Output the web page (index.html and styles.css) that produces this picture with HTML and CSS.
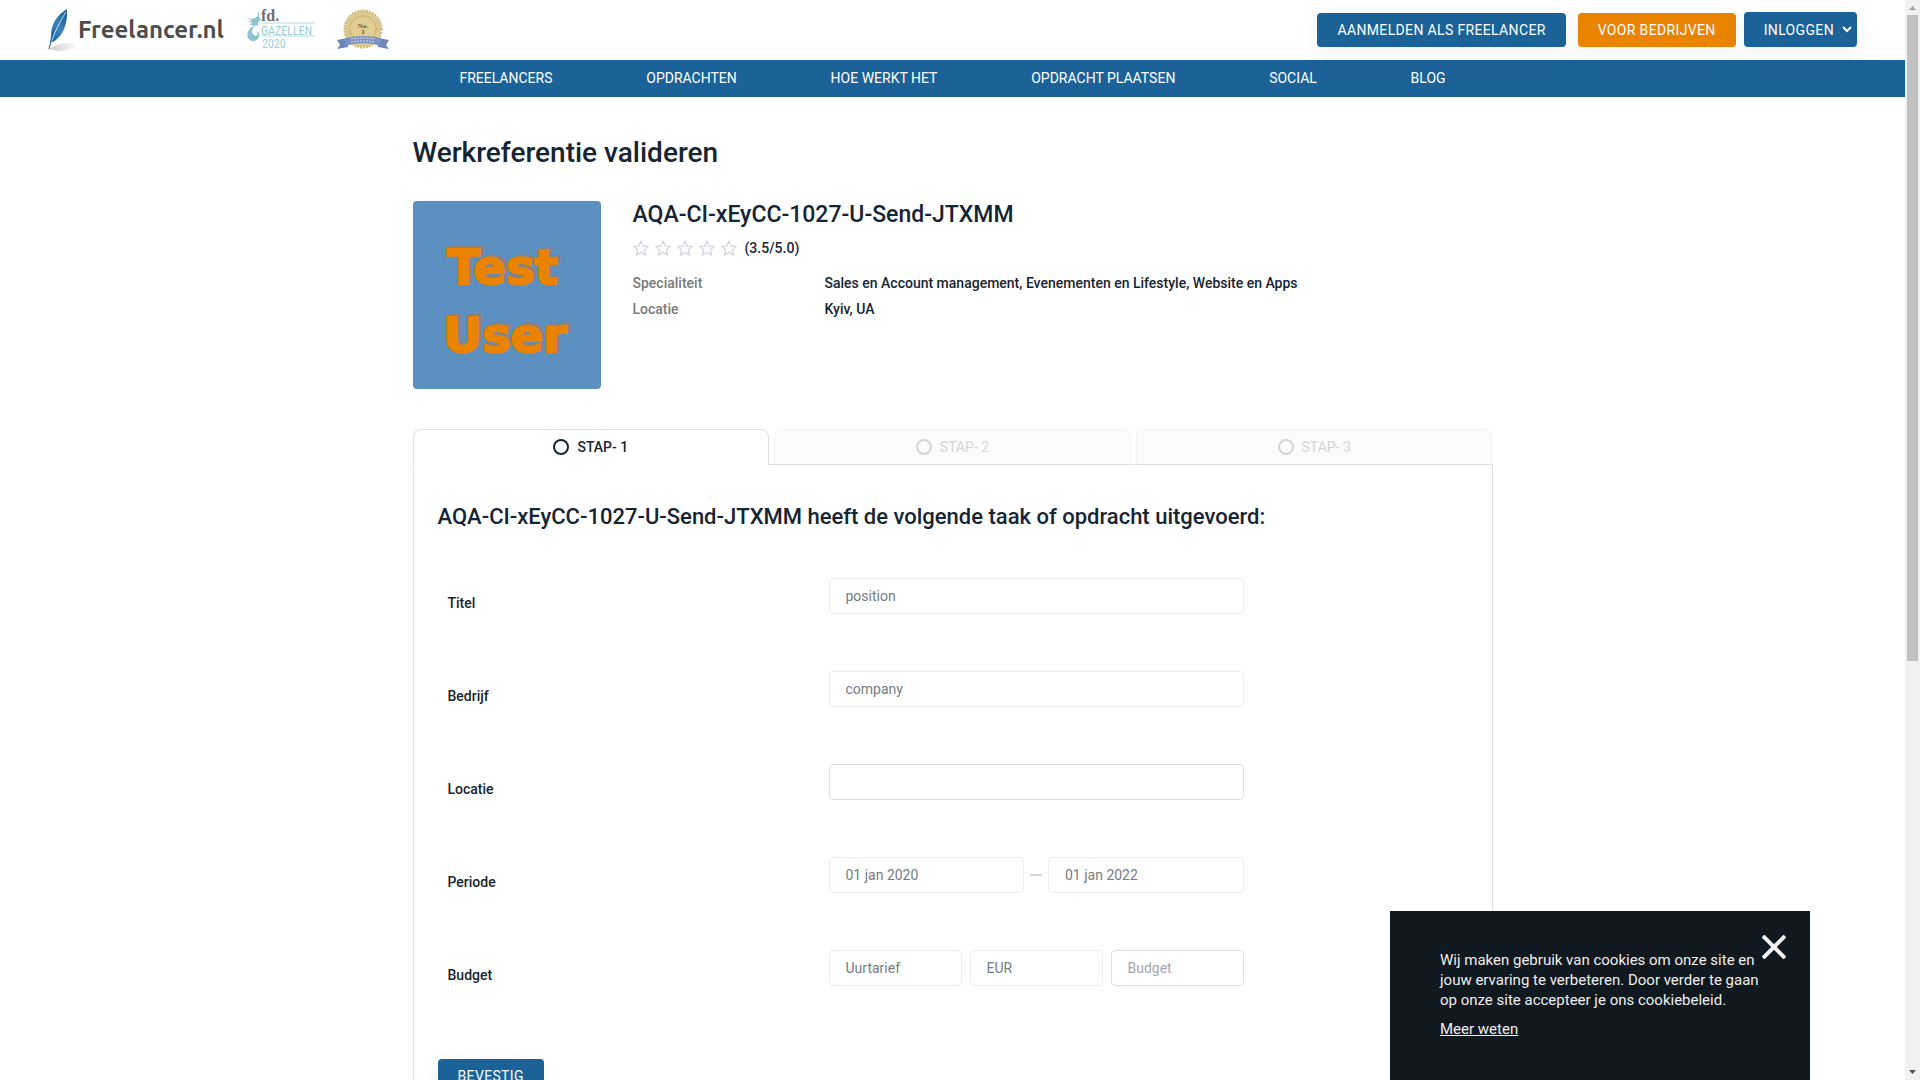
FILE: index.html
```html
<!DOCTYPE html>
<html lang="nl">
<head>
<meta charset="utf-8">
<title>Werkreferentie valideren - Freelancer.nl</title>
<meta name="viewport" content="width=device-width, initial-scale=1">
<link rel="stylesheet" href="styles.css">
</head>
<body>
<div class="window">
  <div class="page">
    <header class="topbar">
      <div class="brand">
        <a class="logo" href="#" aria-label="Freelancer.nl">
          <svg width="180" height="46" viewBox="0 0 180 46" aria-hidden="true">
            <defs>
              <linearGradient id="feather" x1="0" y1="1" x2="1" y2="0"><stop offset="0" stop-color="#1b5f99"/><stop offset=".5" stop-color="#3b82bd"/><stop offset="1" stop-color="#14568d"/></linearGradient>
              <linearGradient id="shade" x1="0" x2="1"><stop offset="0" stop-color="#cfcfcf"/><stop offset="1" stop-color="#fff"/></linearGradient>
            </defs>
            <path d="M1 41C10 35 21 34 31 36C27 41 15 45 5 42Z" fill="url(#shade)"/>
            <path d="M19 1C9 7 3 16 3 28L2 35C12 32 20 20 19 1Z" fill="url(#feather)"/>
            <path d="M18 4C12 13 6 25 1 41" fill="none" stroke="#c8def0" stroke-width="1"/>
            <path d="M4 29L1 41" stroke="#2f6698" stroke-width="1"/>
            <text class="logo-text" x="30" y="30">Freelancer.nl</text>
          </svg>
        </a>
        <svg class="gazellen" width="70" height="40" viewBox="0 0 70 40" role="img" aria-label="FD Gazellen 2020">
          <path d="M0 7L5 9L9 8C12 7 12 4 13 0L13 7L15 10L13 11C11 13 12 15 13 16L10 15C6 17 5 23 8 25C11 27 13 24 10 21C15 22 14 29 9 31C3 32 0 27 2 22C3 19 5 17 8 16L3 14L7 13L2 11L6 11Z" fill="#8cc5d2"/>
          <path d="M16 13H69M16 26H69" stroke="#b5d9e1" stroke-width="1"/>
          <text class="fd" x="15" y="11">fd.</text>
          <text class="gaz" x="15" y="25">GAZELLEN</text>
          <text class="year" x="16" y="38">2020</text>
        </svg>
        <svg class="award" width="54" height="42" viewBox="0 0 54 42" role="img" aria-label="No. 1">
          <circle cx="27" cy="20" r="18" fill="#dcc98e"/>
          <circle cx="27" cy="20" r="18.500" fill="none" stroke="#cdb879" stroke-width="2" stroke-dasharray="2 1"/>
          <circle cx="27" cy="20" r="13" fill="#e0cd92" stroke="#a9955c" stroke-dasharray="1 1"/>
          <text class="no" x="27" y="19">No.</text><text class="no" x="27" y="25">1</text>
          <path d="M1 40L4 36L1 31L12 29V38ZM53 40L50 36L53 31L42 29V38Z" fill="#6d85b8"/>
          <path d="M9 29Q27 25 45 29V37Q27 31 9 37Z" fill="#7b93c4"/>
          <path d="M15 30Q27 28 39 30M15 33Q27 31 39 33" fill="none" stroke="#d5deed" stroke-dasharray="2 1"/>
        </svg>
      </div>
      <div class="actions">
        <a class="btn" href="#">AANMELDEN ALS FREELANCER</a>
        <a class="btn btn-orange" href="#">VOOR BEDRIJVEN</a>
        <button class="btn btn-login" type="button">INLOGGEN
          <svg width="10" height="7" viewBox="0 0 10 7" aria-hidden="true"><path d="M1 1L5 5L9 1" fill="none" stroke="#fff" stroke-width="2"/></svg>
        </button>
      </div>
    </header>
    <nav class="nav">
      <ul class="nav-list">
        <li><a href="#">FREELANCERS</a></li>
        <li><a href="#">OPDRACHTEN</a></li>
        <li><a href="#">HOE WERKT HET</a></li>
        <li><a href="#">OPDRACHT PLAATSEN</a></li>
        <li><a href="#">SOCIAL</a></li>
        <li><a href="#">BLOG</a></li>
      </ul>
    </nav>
    <main class="content">
      <h1>Werkreferentie valideren</h1>
      <section class="profile">
        <svg class="avatar" width="188" height="188" viewBox="0 0 188 188" role="img" aria-label="Test User">
          <rect width="188" height="188" fill="#5b90c1"/>
          <g class="avatar-shadow"><text x="37" y="81">Test</text><text x="33" y="149">User</text></g>
          <g class="avatar-text"><text x="34" y="83">Test</text><text x="30" y="151">User</text></g>
        </svg>
        <div class="info">
          <h2>AQA-CI-xEyCC-1027-U-Send-JTXMM</h2>
          <div class="rating">
            <svg width="104" height="16" viewBox="0 0 104 16" aria-hidden="true">
              <defs><path id="star" d="M8 1L10 6L15 6.500L11.300 10L12.500 15L8 12.300L3.500 15L4.700 10L1 6.500L6 6Z" fill="none" stroke="#d5dae0" stroke-width="1.500" stroke-linejoin="round"/></defs>
              <use href="#star"/><use href="#star" x="22"/><use href="#star" x="44"/><use href="#star" x="66"/><use href="#star" x="88"/>
            </svg>
            <span>(3.5/5.0)</span>
          </div>
          <dl class="facts">
            <dt>Specialiteit</dt><dd>Sales en Account management, Evenementen en Lifestyle, Website en Apps</dd>
            <dt>Locatie</dt><dd>Kyiv, UA</dd>
          </dl>
        </div>
      </section>
      <div class="tabs">
        <button class="tab tab-active" type="button"><span class="ring"></span>STAP- 1</button>
        <button class="tab" type="button" disabled><span class="ring"></span>STAP- 2</button>
        <button class="tab" type="button" disabled><span class="ring"></span>STAP- 3</button>
      </div>
      <form class="panel">
        <h3>AQA-CI-xEyCC-1027-U-Send-JTXMM heeft de volgende taak of opdracht uitgevoerd:</h3>
        <div class="row"><label for="title">Titel</label><div class="fields"><input id="title" type="text" value="position" disabled></div></div>
        <div class="row"><label for="company">Bedrijf</label><div class="fields"><input id="company" type="text" value="company" disabled></div></div>
        <div class="row"><label for="place">Locatie</label><div class="fields"><input id="place" type="text"></div></div>
        <div class="row"><label for="from">Periode</label><div class="fields period"><input id="from" type="text" value="01 jan 2020" disabled><span class="dash"></span><input type="text" value="01 jan 2022" aria-label="Einddatum" disabled></div></div>
        <div class="row"><label for="rate">Budget</label><div class="fields"><input id="rate" type="text" value="Uurtarief" disabled><input type="text" value="EUR" aria-label="Valuta" disabled><input type="text" placeholder="Budget" aria-label="Bedrag"></div></div>
        <button class="btn submit" type="button">BEVESTIG</button>
      </form>
    </main>
  </div>
  <div class="scrollbar" aria-hidden="true">
    <svg width="15" height="15" viewBox="0 0 15 15"><path d="M4 10L7.500 6L11 10Z" fill="#a3a3a3"/></svg>
    <div class="track"><div class="thumb"></div></div>
    <svg width="15" height="15" viewBox="0 0 15 15"><path d="M4 5L7.500 9L11 5Z" fill="#505050"/></svg>
  </div>
</div>
<aside class="cookie">
  <p>Wij maken gebruik van cookies om onze site en jouw ervaring te verbeteren. Door verder te gaan op onze site accepteer je ons cookiebeleid.</p>
  <a href="#">Meer weten</a>
  <button class="close" type="button" aria-label="Sluiten"><svg width="24" height="24" viewBox="0 0 24 24" aria-hidden="true"><path d="M1 1L23 23M23 1L1 23" stroke="#f1f1f1" stroke-width="4"/></svg></button>
</aside>
</body>
</html>
```
FILE: styles.css
```css
* { box-sizing: border-box; }
body { margin: 0; font-family: Roboto, "Liberation Sans", sans-serif; font-size: 14px; line-height: 20px; color: #162533; background: #fff; }
h1, h2, h3, p, dl, dd, ul { margin: 0; padding: 0; font-weight: 500; }
button, input { font: inherit; }
a { color: inherit; text-decoration: none; }
.window { display: flex; height: 100vh; overflow: hidden; }
.page { flex: 1; min-width: 0; overflow: hidden; }

.topbar { display: flex; justify-content: space-between; height: 60px; padding: 0 48px; }
.brand { display: flex; align-items: flex-start; }
.logo { margin-top: 8px; }
.logo svg { display: block; }
.logo-text { font: 700 24px Ubuntu, "Noto Sans", sans-serif; fill: #4d4d4d; }
.gazellen { margin: 10px 0 0 18px; overflow: visible; }
.fd { font: 700 16px "Liberation Serif", serif; fill: #6e6e6e; }
.gaz { font: 400 12px "Roboto Condensed", "Liberation Sans Narrow", Roboto, sans-serif; fill: #9dced9; }
.year { font: 400 12px "Roboto Condensed", "Liberation Sans Narrow", Roboto, sans-serif; fill: #9dced9; }
.award { margin: 9px 0 0 20px; }
.no { font: 700 7px "Liberation Serif", serif; fill: #6b5d38; text-anchor: middle; }
.actions { display: flex; align-items: flex-end; padding-bottom: 13px; }
.btn { display: inline-flex; align-items: center; height: 34px; padding: 0 20px; border: 0; border-radius: 4px; background: #1b6299; color: #fff; letter-spacing: .025em; box-shadow: 0 10px 30px rgba(0, 0, 0, .05); }
.btn-orange { margin: 0 8px 0 12px; background: #e98300; }
.btn-login { height: 35px; gap: 8px; padding-right: 5px; }

.nav { background: #1b6299; color: #fff; }
.nav-list { display: flex; justify-content: space-around; width: 1080px; max-width: 100%; margin: 0 auto; padding: 8px 0 9px; list-style: none; font-weight: 400; }

.content { width: 1080px; max-width: 100%; margin: 0 auto; padding-top: 36px; }
h1 { font-size: 28px; line-height: 40px; }
.profile { display: flex; gap: 32px; margin-top: 28px; }
.avatar { border-radius: 4px; }
.avatar text { font: 700 48px "DejaVu Sans", sans-serif; stroke-width: 2px; }
.avatar-shadow { fill: #8d8078; stroke: #8d8078; }
.avatar-text { fill: #e98300; stroke: #e98300; }
h2 { font-size: 23px; line-height: 28px; }
.rating { display: flex; align-items: center; gap: 8px; margin-top: 9px; font-weight: 500; }
.facts { display: grid; grid-template-columns: 192px auto; row-gap: 6px; margin-top: 15px; font-weight: 500; }
.facts dt { color: #7a7a7a; }

.tabs { display: grid; grid-template-columns: repeat(3, 1fr); gap: 5px; margin-top: 40px; }
.tab { display: flex; align-items: center; justify-content: center; gap: 8px; height: 36px; margin-bottom: -1px; padding: 0; border: 1px solid #f3f3f3; border-bottom-color: #dfe0e1; border-radius: 8px 8px 0 0; background: #fbfbfb; color: #d5d5d5; }
.tab-active { border-color: #dfe0e1; border-bottom-color: #fff; background: #fff; color: #162533; font-weight: 500; z-index: 1; }
.ring { width: 16px; height: 16px; border: 2px solid; border-radius: 50%; }
.panel { padding: 36px 24px 60px; border: 1px solid #dfe0e1; }
h3 { font-size: 22px; line-height: 32px; margin-bottom: 45px; }
.row { display: grid; grid-template-columns: 391px 415px; height: 93px; }
.row label { padding: 15px 10px; font-weight: 500; }
.fields { display: flex; gap: 8px; height: 36px; }
.period { gap: 6px; align-items: center; }
.fields input { flex: 1; min-width: 0; height: 36px; padding: 0 16px; border: 1px solid #dfe0e1; border-radius: 4px; background: #fff; color: #757c84; }
.fields input:disabled { border-color: #ededed; }
.fields input::placeholder { color: #a3a8b2; }
.dash { width: 12px; height: 2px; background: #d5dae0; }
.submit { margin-top: 16px; }

.scrollbar { display: flex; flex-direction: column; width: 15px; background: #f1f1f1; }
.track { flex: 1; padding: 0 2px; }
.thumb { height: 61.5%; background: #c1c1c1; }

.cookie { position: fixed; right: 110px; bottom: 0; width: 420px; height: 169px; padding: 39px 50px 0; background: #111920; color: #eee; font-size: 15px; }
.cookie p { font-weight: 400; margin-bottom: 9px; }
.cookie a { text-decoration: underline; }
.close { position: absolute; top: 24px; right: 24px; padding: 0; border: 0; background: none; line-height: 0; }
```
